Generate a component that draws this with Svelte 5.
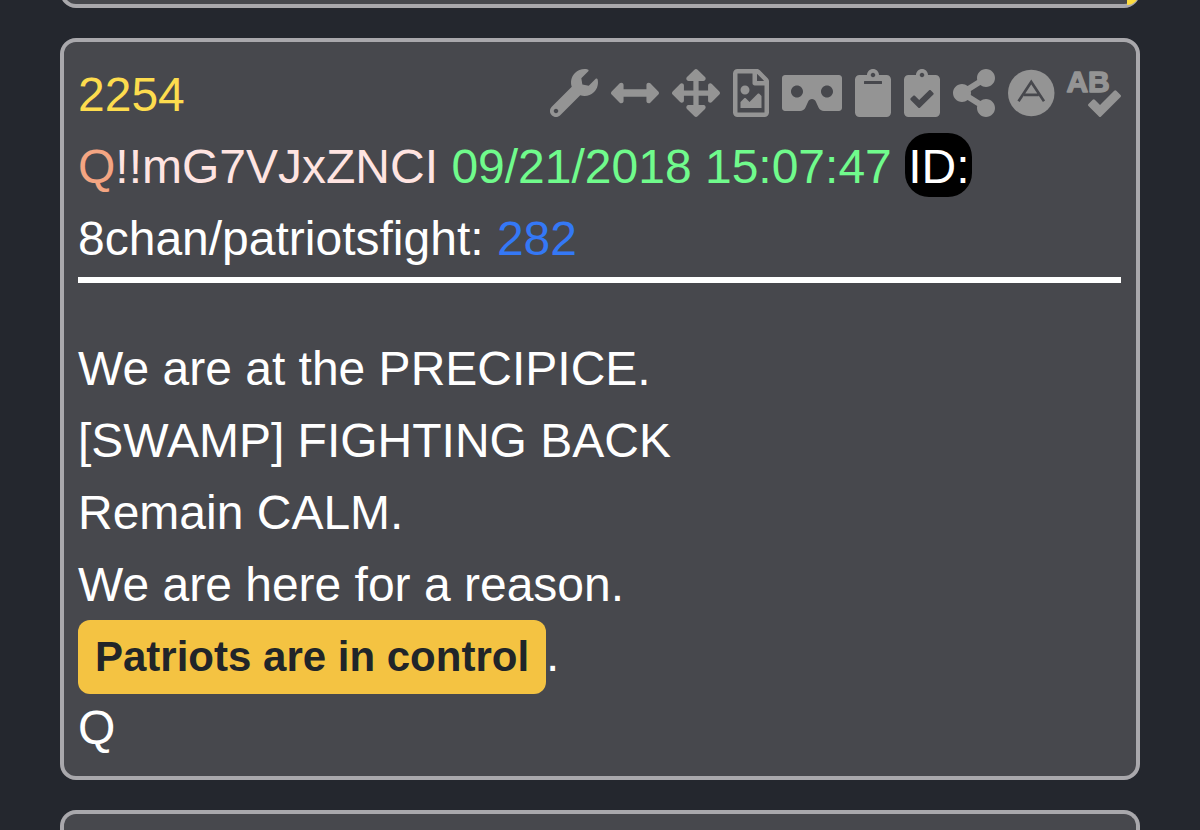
<script>
  const icons = [
    { name: 'Tools', w: 512, d: 'M507.73 109.1c-2.24-9.03-13.54-12.09-20.12-5.51l-74.36 74.36-67.88-11.31-11.31-67.88 74.36-74.36c6.62-6.62 3.43-17.9-5.66-20.16-47.38-11.74-99.55.91-136.58 37.93-39.64 39.64-50.55 97.1-34.05 147.2L18.74 402.76c-24.99 24.99-24.99 65.51 0 90.5 24.99 24.99 65.51 24.99 90.5 0l213.21-213.21c50.12 16.71 107.47 5.68 147.37-34.22 37.07-37.07 49.7-89.32 37.91-136.73zM64 472c-13.25 0-24-10.75-24-24 0-13.26 10.75-24 24-24s24 10.74 24 24c0 13.25-10.75 24-24 24z' },
    { name: 'Widen', w: 512, d: 'M377.941 169.941V216H134.059v-46.059c0-21.382-25.851-32.09-40.971-16.971L7.029 239.029c-9.373 9.373-9.373 24.568 0 33.941l86.059 86.059c15.119 15.119 40.971 4.411 40.971-16.971V296h243.882v46.059c0 21.382 25.851 32.09 40.971 16.971l86.059-86.059c9.373-9.373 9.373-24.568 0-33.941l-86.059-86.059c-15.119-15.12-40.971-4.412-40.971 16.97z' },
    { name: 'Expand', w: 512, d: 'M352.201 425.775l-79.196 79.196c-9.373 9.373-24.568 9.373-33.941 0l-79.196-79.196c-15.119-15.119-4.411-40.971 16.971-40.97h51.162L228 284H127.196v51.162c0 21.382-25.851 32.09-40.971 16.971L7.029 272.937c-9.373-9.373-9.373-24.569 0-33.941L86.225 159.8c15.119-15.119 40.971-4.411 40.971 16.971V228H228V127.196h-51.23c-21.382 0-32.09-25.851-16.971-40.971l79.196-79.196c9.373-9.373 24.568-9.373 33.941 0l79.196 79.196c15.119 15.119 4.411 40.971-16.971 40.971h-51.162V228h100.804v-51.162c0-21.382 25.851-32.09 40.97-16.971l79.196 79.196c9.373 9.373 9.373 24.569 0 33.941L425.773 352.2c-15.119 15.119-40.971 4.411-40.97-16.971V284H284v100.804h51.23c21.382 0 32.09 25.851 16.971 40.971z' },
    { name: 'Save as image', w: 384, d: 'M369.9 97.9L286 14C277 5 264.8-.1 252.1-.1H48C21.5 0 0 21.5 0 48v416c0 26.5 21.5 48 48 48h288c26.5 0 48-21.5 48-48V131.9c0-12.7-5.1-25-14.1-34zM332.1 128H256V51.9l76.1 76.1zM48 464V48h160v104c0 13.3 10.7 24 24 24h104v288H48zm32-48h224V288l-23.5-23.5c-4.7-4.7-12.3-4.7-17 0L176 352l-39.5-39.5c-4.7-4.7-12.3-4.7-17 0L80 352v64zm48-240c-26.5 0-48 21.5-48 48s21.5 48 48 48 48-21.5 48-48-21.5-48-48-48z' },
    { name: 'Viewer', w: 640, d: 'M608 64H32C14.33 64 0 78.33 0 96v320c0 17.67 14.33 32 32 32h160.22c25.19 0 48.03-14.77 58.36-37.74l27.74-61.64C286.21 331.08 302.35 320 320 320s33.79 11.08 41.68 28.62l27.74 61.64C399.75 433.23 422.6 448 447.78 448H608c17.67 0 32-14.33 32-32V96c0-17.67-14.33-32-32-32zM160 304c-35.35 0-64-28.65-64-64s28.65-64 64-64 64 28.65 64 64-28.65 64-64 64zm320 0c-35.35 0-64-28.65-64-64s28.65-64 64-64 64 28.65 64 64-28.65 64-64 64z' },
    { name: 'Copy', w: 384, d: 'M384 112v352c0 26.51-21.49 48-48 48H48c-26.51 0-48-21.49-48-48V112c0-26.51 21.49-48 48-48h80c0-35.29 28.71-64 64-64s64 28.71 64 64h80c26.51 0 48 21.49 48 48zM192 40c-13.255 0-24 10.745-24 24s10.745 24 24 24 24-10.745 24-24-10.745-24-24-24m96 114v-20a6 6 0 0 0-6-6H102a6 6 0 0 0-6 6v20a6 6 0 0 0 6 6h180a6 6 0 0 0 6-6z' },
    { name: 'Copy link', w: 384, d: 'M336 64h-80c0-35.3-28.7-64-64-64s-64 28.7-64 64H48C21.5 64 0 85.5 0 112v352c0 26.5 21.5 48 48 48h288c26.5 0 48-21.5 48-48V112c0-26.5-21.5-48-48-48zM192 40c13.3 0 24 10.7 24 24s-10.7 24-24 24-24-10.7-24-24 10.7-24 24-24zm121.2 231.8l-143 141.8c-4.7 4.7-12.3 4.6-17-.1l-82.6-83.3c-4.7-4.7-4.6-12.3.1-17L99.1 285c4.7-4.7 12.3-4.6 17 .1l46 46.4 106-105.2c4.7-4.7 12.3-4.6 17 .1l28.2 28.4c4.7 4.8 4.6 12.3-.1 17z' },
    { name: 'Share', w: 448, d: 'M352 320c-22.608 0-43.387 7.819-59.79 20.895l-102.486-64.054a96.551 96.551 0 0 0 0-41.683l102.486-64.054C308.613 184.181 329.392 192 352 192c53.019 0 96-42.981 96-96S405.019 0 352 0s-96 42.981-96 96c0 7.158.79 14.13 2.276 20.841L155.79 180.895C139.387 167.819 118.608 160 96 160c-53.019 0-96 42.981-96 96s42.981 96 96 96c22.608 0 43.387-7.819 59.79-20.895l102.486 64.054A96.301 96.301 0 0 0 256 416c0 53.019 42.981 96 96 96s96-42.981 96-96-42.981-96-96-96z' },
    { name: 'Answers', w: 496, kind: 'disc' },
    { name: 'Check spelling', w: 576, kind: 'spell', d: 'M571.37 276.48l-45.21-45.3a15.88 15.88 0 0 0-22.59 0l-151.5 151.5-55.41-55.5a15.88 15.88 0 0 0-22.59 0l-45.3 45.3a16 16 0 0 0 0 22.59l112 112.21a15.89 15.89 0 0 0 22.6 0l208-208.21a16 16 0 0 0-.02-22.59z' }
  ];
  const lines = ['We are at the PRECIPICE.', '[SWAMP] FIGHTING BACK', 'Remain CALM.', 'We are here for a reason.'];
</script>

<main>
  <div class="card previous"><span class="corner"></span></div>

  <article class="card post">
    <header>
      <div class="top">
        <a class="number" href="#2254">2254</a>
        <div class="tools">
          {#each icons as icon}
            <button type="button" aria-label={icon.name}>
              <svg viewBox="0 0 {icon.w} 512" height="48" aria-hidden="true">
                {#if icon.kind === 'disc'}
                  <circle cx="248" cy="256" r="248" />
                  <path class="mark" d="M112 343L248 138L384 343M170 276H326" />
                {:else}
                  {#if icon.kind === 'spell'}
                    <text x="-6" y="248">AB</text>
                  {/if}
                  <path d={icon.d} />
                {/if}
              </svg>
            </button>
          {/each}
        </div>
      </div>
      <div class="line">
        <span class="trip"><span class="name">Q</span>!!mG7VJxZNCI</span>
        <time datetime="2018-09-21T15:07:47">09/21/2018 15:07:47</time>
        <span class="id">ID:</span>
      </div>
      <div class="line">8chan/patriotsfight: <a class="ref" href="#282">282</a></div>
    </header>
    <hr />
    <div class="body">
      {#each lines as line}
        <p>{line}</p>
      {/each}
      <p class="marked"><mark>Patriots are in control</mark>.</p>
      <p>Q</p>
    </div>
  </article>

  <div class="card next"></div>
</main>

<style>
  :global(body) {
    margin: 0;
    background: #24272e;
  }
  main {
    box-sizing: border-box;
    min-height: 100vh;
    padding: 0 60px;
    display: flex;
    flex-direction: column;
    gap: 30px;
    overflow: hidden;
    font: 48px/72px "Liberation Sans", Arial, sans-serif;
    color: #fff;
  }
  .card {
    box-sizing: border-box;
    background: #47484d;
    border: 4px solid #a9a8ac;
    border-radius: 16px;
  }
  .previous {
    position: relative;
    height: 40px;
    margin-top: -32px;
  }
  .corner {
    position: absolute;
    right: -3px;
    bottom: -1px;
    width: 12px;
    height: 14px;
    background: #fddc3e;
    border-radius: 0 0 12px 0;
  }
  .next {
    flex: 1;
    border-bottom: 0;
    border-radius: 16px 16px 0 0;
  }
  .post {
    padding: 17px 15px 12px 14px;
  }
  .top {
    display: flex;
    flex-wrap: wrap;
    justify-content: space-between;
  }
  a {
    text-decoration: none;
  }
  .number {
    color: #fddc4e;
  }
  .tools {
    display: flex;
    flex-wrap: wrap;
    align-items: center;
    gap: 13px;
    min-height: 68px;
  }
  button {
    display: flex;
    padding: 0;
    border: 0;
    background: none;
    color: #949494;
    cursor: pointer;
  }
  svg {
    display: block;
    fill: currentColor;
    overflow: visible;
  }
  .mark {
    fill: none;
    stroke: #47484d;
    stroke-width: 28;
  }
  text {
    font: bold 320px "Liberation Sans", Arial, sans-serif;
    stroke: currentColor;
    stroke-width: 16;
    stroke-linejoin: round;
  }
  .top {
    align-items: flex-start;
  }
  .trip {
    color: #ffe4e1;
  }
  .name {
    color: #f4a582;
  }
  time {
    color: #70fb8c;
  }
  .id {
    padding: 7px 3px 4px;
    background: #000;
    border-radius: 24px;
  }
  .ref {
    color: #3478f6;
  }
  hr {
    height: 6px;
    margin: 2px 0 50px;
    border: 0;
    background: #fff;
  }
  p {
    margin: 0;
  }
  .marked {
    display: flex;
    align-items: baseline;
    height: 73px;
    margin-top: -2px;
  }
  mark {
    padding: 0 17px;
    font-size: 42px;
    font-weight: bold;
    line-height: 74px;
    color: #212529;
    background: #f4c342;
    border-radius: 12px;
  }
</style>
